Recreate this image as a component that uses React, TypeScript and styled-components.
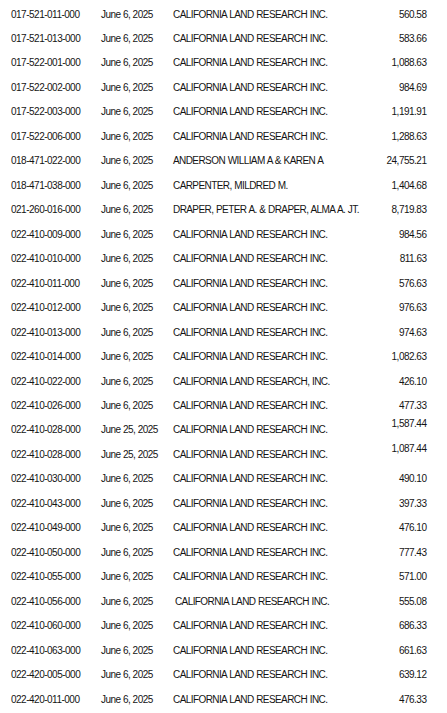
import React from "react";
import styled, { createGlobalStyle } from "styled-components";

const Global = createGlobalStyle`
  html, body { margin: 0; padding: 0; background: #ffffff; }
  body { font-family: "Liberation Sans", Arial, sans-serif; color: #141414; }
`;

const Table = styled.div`
  width: 447px;
  padding-top: 2.5px;
  display: flex;
  flex-direction: column;
`;

const Row = styled.div`
  display: grid;
  grid-template-columns: 90px 72px 1fr auto;
  padding: 0 20.5px 0 11px;
  height: 24.48px;
  font-size: 10px;
  line-height: 24.48px;
  letter-spacing: -0.5px;
  white-space: nowrap;
`;

const Parcel = styled.span``;

const DateCell = styled.span``;

const Name = styled.span<{ $loose?: boolean }>`
  word-spacing: ${(p) => (p.$loose ? "0.5px" : "0.4px")};
  padding-left: ${(p) => (p.$loose ? "2px" : "0")};
  letter-spacing: ${(p) => (p.$loose ? "-0.6px" : "-0.58px")};
`;

const Amount = styled.span<{ $raised?: boolean }>`
  text-align: right;
  align-self: start;
  line-height: ${(p) => (p.$raised ? "12.5px" : "24.48px")};
`;

type Rec = {
  parcel: string;
  date?: string;
  name?: string;
  amount: string;
  raised?: boolean;
  loose?: boolean;
};

const CLR = "CALIFORNIA LAND RESEARCH INC.";

const rows: Rec[] = [
  { parcel: "017-521-011-000", amount: "560.58" },
  { parcel: "017-521-013-000", amount: "583.66" },
  { parcel: "017-522-001-000", amount: "1,088.63" },
  { parcel: "017-522-002-000", amount: "984.69" },
  { parcel: "017-522-003-000", amount: "1,191.91" },
  { parcel: "017-522-006-000", amount: "1,288.63" },
  { parcel: "018-471-022-000", name: "ANDERSON WILLIAM A & KAREN A", amount: "24,755.21" },
  { parcel: "018-471-038-000", name: "CARPENTER, MILDRED M.", amount: "1,404.68" },
  { parcel: "021-260-016-000", name: "DRAPER, PETER A. & DRAPER, ALMA A. JT.", amount: "8,719.83" },
  { parcel: "022-410-009-000", amount: "984.56" },
  { parcel: "022-410-010-000", amount: "811.63" },
  { parcel: "022-410-011-000", amount: "576.63" },
  { parcel: "022-410-012-000", amount: "976.63" },
  { parcel: "022-410-013-000", amount: "974.63" },
  { parcel: "022-410-014-000", amount: "1,082.63" },
  { parcel: "022-410-022-000", name: "CALIFORNIA LAND RESEARCH, INC.", amount: "426.10" },
  { parcel: "022-410-026-000", amount: "477.33" },
  { parcel: "022-410-028-000", date: "June 25, 2025", amount: "1,587.44", raised: true },
  { parcel: "022-410-028-000", date: "June 25, 2025", amount: "1,087.44", raised: true },
  { parcel: "022-410-030-000", amount: "490.10" },
  { parcel: "022-410-043-000", amount: "397.33" },
  { parcel: "022-410-049-000", amount: "476.10" },
  { parcel: "022-410-050-000", amount: "777.43" },
  { parcel: "022-410-055-000", amount: "571.00" },
  { parcel: "022-410-056-000", amount: "555.08", loose: true },
  { parcel: "022-410-060-000", amount: "686.33" },
  { parcel: "022-410-063-000", amount: "661.63" },
  { parcel: "022-420-005-000", amount: "639.12" },
  { parcel: "022-420-011-000", amount: "476.33" },
];

export default function App() {
  return (
    <>
      <Global />
      <Table>
        {rows.map((r, i) => (
          <Row key={i}>
            <Parcel>{r.parcel}</Parcel>
            <DateCell>{r.date ?? "June 6, 2025"}</DateCell>
            <Name $loose={r.loose}>{r.name ?? CLR}</Name>
            <Amount $raised={r.raised}>{r.amount}</Amount>
          </Row>
        ))}
      </Table>
    </>
  );
}
